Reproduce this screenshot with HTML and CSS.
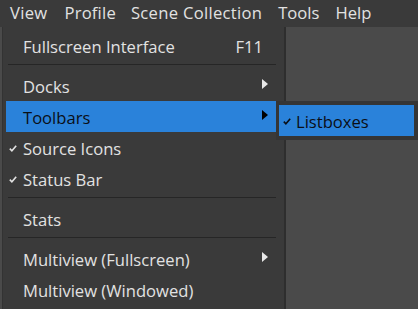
FILE: index.html
```html
<!DOCTYPE html>
<html lang="en">
<head>
    <meta charset="UTF-8">
    <title>View Menu</title>
    <link rel="stylesheet" href="styles.css">
</head>
<body>
    <!-- Main menu bar -->
    <div class="menubar">
        <span class="menubar-item item-view">View</span>
        <span class="menubar-item item-profile">Profile</span>
        <span class="menubar-item item-scene">Scene Collection</span>
        <span class="menubar-item item-tools">Tools</span>
        <span class="menubar-item item-help">Help</span>
    </div>

    <div class="workspace">
        <!-- View dropdown -->
        <div class="dropdown">
            <div class="menu-item">
                <span class="label">Fullscreen Interface</span>
                <span class="shortcut">F11</span>
            </div>
            <div class="separator"></div>
            <div class="menu-item">
                <span class="label">Docks</span>
                <span class="arrow"></span>
            </div>
            <div class="menu-item active">
                <span class="label">Toolbars</span>
                <span class="arrow"></span>
            </div>
            <div class="menu-item">
                <svg class="check" width="8" height="7" viewBox="0 0 8 7"><polyline points="0.8,3.6 2.9,5.8 7.2,0.8" /></svg>
                <span class="label">Source Icons</span>
            </div>
            <div class="menu-item">
                <svg class="check" width="8" height="7" viewBox="0 0 8 7"><polyline points="0.8,3.6 2.9,5.8 7.2,0.8" /></svg>
                <span class="label">Status Bar</span>
            </div>
            <div class="separator"></div>
            <div class="menu-item">
                <span class="label">Stats</span>
            </div>
            <div class="separator"></div>
            <div class="menu-item">
                <span class="label">Multiview (Fullscreen)</span>
                <span class="arrow"></span>
            </div>
            <div class="menu-item">
                <span class="label">Multiview (Windowed)</span>
            </div>
        </div>

        <!-- Toolbars submenu -->
        <div class="submenu">
            <div class="menu-item active">
                <svg class="check" width="8" height="7" viewBox="0 0 8 7"><polyline points="0.8,3.6 2.9,5.8 7.2,0.8" /></svg>
                <span class="label">Listboxes</span>
            </div>
        </div>
    </div>
</body>
</html>
```

FILE: styles.css
```css
body {
    margin: 0;
    padding: 0;
    width: 418px;
    height: 309px;
    overflow: hidden;
    background: #4a4a4a;
    font-family: 'Open Sans', 'Noto Sans', Arial, sans-serif;
    font-size: 16.6px;
    color: #e2e2e2;
}
.menubar {
    display: flex;
    height: 27px;
    align-items: center;
    background: #3a3a3a;
}
.menubar-item {
    line-height: 27px;
    margin-top: -2px;
}
.item-view { margin-left: 10px; letter-spacing: 0.3px; }
.item-profile { margin-left: 17px; letter-spacing: 0.2px; }
.item-scene { margin-left: 15px; letter-spacing: 0.3px; }
.item-tools { margin-left: 16px; }
.item-help { margin-left: 16px; }

.workspace {
    position: relative;
    height: 282px;
    background: #4a4a4a;
}
.dropdown {
    position: absolute;
    left: 2px;
    top: 0;
    width: 282px;
    height: 282px;
    padding-top: 3px;
    box-sizing: border-box;
    background: #3a3a3a;
    border-left: 1px solid #333;
    box-shadow: 2px 0 0 #2e2e2e;
}
.menu-item {
    position: relative;
    display: flex;
    align-items: center;
    height: 31px;
    margin: 0 8px 0 3px;
    padding: 1px 0 0 17px;
    box-sizing: border-box;
}
.menu-item.active {
    background: #2a82da;
    color: #0a0f16;
}
.label {
    flex: 1;
    white-space: nowrap;
}
.shortcut {
    margin-right: 13px;
}
.arrow {
    width: 0;
    height: 0;
    margin-right: 8px;
    margin-top: -4px;
    border-left: 6px solid #e8e8e8;
    border-top: 5px solid transparent;
    border-bottom: 5px solid transparent;
}
.active .arrow {
    border-left-color: #000;
}
.check {
    position: absolute;
    left: 3px;
    top: 13px;
    fill: none;
    stroke: #e2e2e2;
    stroke-width: 1.6;
}
.active .check {
    stroke: #0a0f16;
}
.separator {
    height: 1px;
    margin: 3px 8px 5px 5px;
    background: #262626;
}
.submenu {
    position: absolute;
    left: 276px;
    top: 74px;
    width: 142px;
    height: 39px;
    padding: 4px 4px 0 3px;
    box-sizing: border-box;
    background: #353535;
}
.submenu .menu-item {
    height: 31px;
    margin: 0;
    padding-left: 17px;
}
.submenu .check {
    left: 4px;
}
```
